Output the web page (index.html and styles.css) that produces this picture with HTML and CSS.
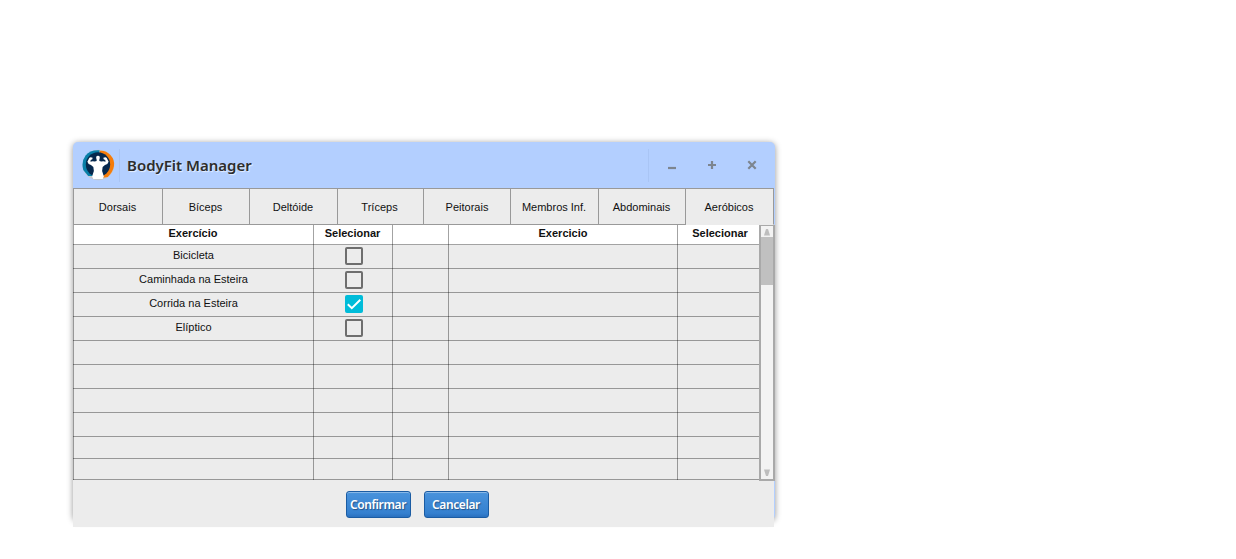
FILE: index.html
```html
<!DOCTYPE html>
<html lang="pt-BR">
<head>
<meta charset="utf-8">
<title>BodyFit Manager</title>
<link rel="stylesheet" href="styles.css">
</head>
<body>
<main class="window">
  <header class="titlebar">
    <svg class="logo" viewBox="0 0 32 32" width="33" height="32" preserveAspectRatio="none">
      <circle cx="16" cy="16" r="15.3" fill="#c5c9cf"/>
      <path d="M17 1.8Q23 1 27.5 6T31 17 25 28L19 29Z" fill="#f57c0a"/>
      <path d="M17 1.2Q8 .5 3.5 6.5T1.2 21L6 27 14 27Z" fill="#087fa8"/>
      <ellipse cx="15.5" cy="15.5" rx="11.8" ry="12.3" fill="#06284d"/>
      <path d="M5.2 12.8 7 9Q8 7.6 10.3 8.7L10 10.3 8.4 11 8.2 12.7Q10 11.7 12.4 12.6L14.2 12V10.8Q12.8 7 15.5 6.8 18.2 7 16.8 10.8V12L18.6 12.6Q21 11.7 22.8 12.7L22.6 11 21 10.3 20.7 8.7Q23 7.6 24 9L25.8 12.8Q25.3 15.3 22.3 16L20 18 19.5 22 21.2 27.5 20 30H11L9.8 27.5 11.5 22 11 18 8.7 16Q5.7 15.3 5.2 12.8Z" fill="#fff"/>
    </svg>
    <h1 class="title">BodyFit Manager</h1>
    <div class="controls">
      <svg viewBox="0 0 10 10"><path d="M1 8H9" /></svg>
      <svg viewBox="0 0 10 10"><path d="M1 5H9M5 1V9" /></svg>
      <svg viewBox="0 0 10 10"><path d="M1.3 1.3 8.7 8.7M8.7 1.3 1.3 8.7" /></svg>
    </div>
  </header>
  <section class="content">
    <nav class="tabs">
      <span class="tab">Dorsais</span><span class="tab">Bíceps</span><span class="tab">Deltóide</span><span class="tab">Tríceps</span><span class="tab">Peitorais</span><span class="tab">Membros Inf.</span><span class="tab">Abdominais</span><span class="tab active">Aeróbicos</span>
    </nav>
    <div class="list">
      <div class="table">
        <div class="row head"><span>Exercício</span><span>Selecionar</span><span></span><span>Exercicio</span><span>Selecionar</span></div>
        <div class="row"><span>Bicicleta</span><span><i class="check"></i></span><span></span><span></span><span></span></div>
        <div class="row"><span>Caminhada na Esteira</span><span><i class="check"></i></span><span></span><span></span><span></span></div>
        <div class="row"><span>Corrida na Esteira</span><span><i class="check checked"><svg viewBox="0 0 18 18"><path d="M2.8 9.3 6.8 13.2 15.3 4.8"/></svg></i></span><span></span><span></span><span></span></div>
        <div class="row"><span>Elíptico</span><span><i class="check"></i></span><span></span><span></span><span></span></div>
        <div class="row"><span></span><span></span><span></span><span></span><span></span></div>
        <div class="row"><span></span><span></span><span></span><span></span><span></span></div>
        <div class="row"><span></span><span></span><span></span><span></span><span></span></div>
        <div class="row"><span></span><span></span><span></span><span></span><span></span></div>
        <div class="row short"><span></span><span></span><span></span><span></span><span></span></div>
        <div class="row last"><span></span><span></span><span></span><span></span><span></span></div>
      </div>
      <div class="scrollbar">
        <svg viewBox="0 0 12 11"><path d="M5 3H7L9 9.5H3Z"/></svg>
        <div class="thumb"></div>
        <svg class="down" viewBox="0 0 12 11"><path d="M3 1.5H9L7 8H5Z"/></svg>
      </div>
    </div>
    <footer class="actions"><button class="btn">Confirmar</button><button class="btn">Cancelar</button></footer>
  </section>
</main>
</body>
</html>
```
FILE: styles.css
```css
* { box-sizing: border-box; }
html { height: 100%; }
body { min-height: 559px; margin: 0; padding: 142px 0 0 73px; background: #fff; font: 11px/14px "Liberation Sans", Arial, sans-serif; color: #111; }
.window { width: 702px; height: 378px; background: #b3cfff; border-radius: 5px; box-shadow: 0 1px 6px rgba(0,0,0,.42); }
.titlebar { display: flex; align-items: center; height: 46px; padding-left: 9px; }
.logo { flex: none; margin-right: 4px; }
.title { display: flex; align-items: center; height: 33px; margin: 0; padding: 0 0 1px 7px; border-left: 1px solid #a9c5f5; font: 600 15px/20px "Noto Sans", sans-serif; color: #2d2d2d; text-shadow: 1px 1px 1px rgba(255,255,255,.7); white-space: nowrap; }
.controls { display: flex; align-items: center; gap: 30px; height: 33px; margin-left: auto; padding: 0 18px; border-left: 1px solid #a9c5f5; }
.controls svg { width: 10px; height: 10px; fill: none; stroke: #7d858f; stroke-width: 2.2; }
.content { width: 701px; height: 339px; background: #ececec; }
.tabs { display: grid; grid-template-columns: 90px 87px 88px 86px 87px 88px 87px 88px; height: 37px; border-top: 1px solid #999; }
.tab { display: flex; align-items: center; justify-content: center; border-right: 1px solid #999; border-bottom: 1px solid #999; padding: 1px 1px 0 0; }
.tab:first-child { border-left: 1px solid #999; }
.tab:nth-child(4) { padding-right: 2px; }
.tab:nth-child(5) { padding-right: 0; }
.active { border-bottom-color: transparent; }
.list { display: flex; width: 702px; height: 256px; }
.table { width: 686px; }
.row { display: grid; grid-template-columns: 241px 79px 56px 229px 81px; height: 24px; box-shadow: inset 0 -1px rgba(0,0,0,.36); }
.row > span { display: flex; justify-content: center; padding: 3px 0 0; border-right: 1px solid rgba(0,0,0,.36); }
.row > span:first-child { border-left: 1px solid rgba(0,0,0,.36); }
.row > span:last-child { border-right: 0; padding-left: 3px; }
.head { height: 20px; background: #fff; font-weight: 700; }
.head > span { padding-top: 1px; }
.head > span:nth-child(-n+2) { padding-right: 1px; }
.row:not(.head) > span:nth-child(2) { padding: 2px 0 0 2px; }
.short { height: 22px; }
.last { height: 21px; }
.check { width: 18px; height: 18px; margin-right: 1px; border: 2px solid #6e6e6e; border-radius: 2px; }
.checked { border: 0; background: #00bcd9; }
.check svg { display: block; fill: none; stroke: #fff; stroke-width: 2; }
.scrollbar { display: flex; flex-direction: column; width: 16px; height: 256px; border: solid rgba(0,0,0,.3); border-width: 1px 2px 2px; background: #f3f3f3; }
.scrollbar svg { width: 12px; height: 11px; fill: #bebebe; }
.scrollbar .down { margin-top: auto; }
.thumb { height: 48px; background: #c0c0c0; }
.actions { display: flex; justify-content: center; gap: 13px; width: 689px; height: 46px; padding: 10px 0 0; }
.btn { width: 65px; height: 27px; margin: 0; padding: 0 1px 0 0; border: 1px solid #1b5ca3; border-radius: 3px; background: linear-gradient(#4993dc, #3580cf 85%, #2a70be); box-shadow: inset 0 1px rgba(255,255,255,.35); color: #fff; font: 600 12px/20px "Noto Sans", sans-serif; letter-spacing: -.4px; text-shadow: 1px 1px 1px rgba(0,0,0,.35); }
```
